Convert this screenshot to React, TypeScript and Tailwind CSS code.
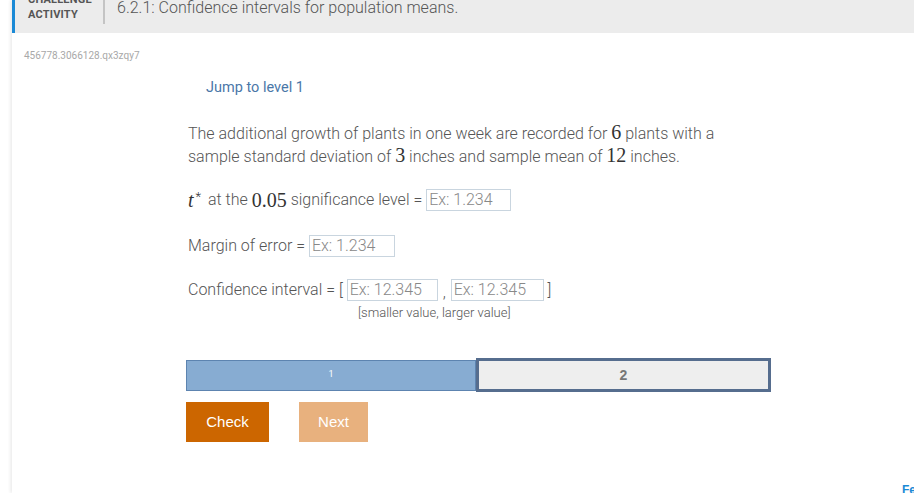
import React from "react";

const M = ({ children, italic = false }: { children: React.ReactNode; italic?: boolean }) => (
  <span className={`font-['Liberation_Serif',serif] text-[20px] leading-[20px] text-[#333] ${italic ? "italic" : ""}`}>{children}</span>
);

const Field = ({ ph, w }: { ph: string; w: string }) => (
  <span className={`inline-flex items-center h-[22px] ${w} border border-[#c9d5df] bg-white px-[2px] text-[16px] font-light text-[#888] leading-none align-middle`}>
    {ph}
  </span>
);

export default function App() {
  return (
    <div className="relative w-[914px] h-[493px] overflow-hidden bg-white font-['Roboto',sans-serif]">
      <div className="ml-[12px] h-full shadow-[-2px_0_3px_rgba(0,0,0,0.07)] flex flex-col">
        <div className="h-[33px] bg-[#ececec] border-l-[3px] border-[#1b8ad6] flex items-start shrink-0">
          <div className="pl-[13px] mt-[-8px] w-[88px] text-[11px] font-bold leading-[15px] text-[#555] tracking-[0.2px]">
            <div>CHALLENGE</div>
            <div>ACTIVITY</div>
          </div>
          <div className="w-[2px] h-[24px] bg-[#c4c4c4]" />
          <div className="ml-[12px] mt-[-2px] text-[16px] font-light text-[#555] leading-[20px]">
            6.2.1: Confidence intervals for population means.
          </div>
        </div>

        <div className="mt-[16px] ml-[12px] text-[10px] leading-[13px] text-[#a8a8a8]">456778.3066128.qx3zqy7</div>

        <div className="ml-[174px] flex flex-col">
          <div className="mt-[16px] ml-[20px] text-[14.5px] leading-[20px] text-[#4a77a8]">Jump to level 1</div>

          <p className="mt-[24px] ml-[2px] text-[16px] leading-[23px] font-light text-[#555]">
            The additional growth of plants in one week are recorded for <M>6</M> plants with a
            <br />
            sample standard deviation of <M>3</M> inches and sample mean of <M>12</M> inches.
          </p>

          <div className="mt-[21px] ml-[2px] h-[22px] flex items-center text-[16px] font-light text-[#555] whitespace-pre">
            <M italic>t</M>
            <span className="text-[13px] text-[#333] self-start mt-[-2px] ml-[2px] mr-[3px]">*</span>
            <span> at the </span>
            <M>0.05</M>
            <span> significance level = </span>
            <Field ph="Ex: 1.234" w="w-[85px]" />
          </div>

          <div className="mt-[24px] ml-[2px] h-[22px] flex items-center text-[16px] font-light text-[#555] whitespace-pre">
            <span>Margin of error = </span>
            <Field ph="Ex: 1.234" w="w-[86px]" />
          </div>

          <div className="mt-[22px] ml-[2px] h-[22px] flex items-center text-[16px] font-light text-[#555] whitespace-pre">
            <span>Confidence interval = [ </span>
            <Field ph="Ex: 12.345" w="w-[91px]" />
            <span className="self-end mb-[-4px] mx-[5px]">,</span>
            <Field ph="Ex: 12.345" w="w-[93px]" />
            <span> ]</span>
          </div>
          <div className="mt-[4px] ml-[172px] text-[13px] leading-[16px] font-light text-[#555]">[smaller value, larger value]</div>

          <div className="mt-[37px] flex items-center w-[585px] h-[34px]">
            <div className="w-[290px] h-[31px] bg-[#87acd2] border border-[#5d84b0] flex items-center justify-center text-[9px] text-white">1</div>
            <div className="w-[295px] h-[34px] bg-[#eeeeee] border-[3px] border-[#566d8e] flex items-center justify-center text-[14px] font-bold text-[#777] font-['Liberation_Sans',sans-serif]">2</div>
          </div>

          <div className="mt-[10px] flex gap-[30px] font-['Liberation_Sans',sans-serif]">
            <div className="w-[83px] h-[40px] bg-[#cc6600] text-white text-[15px] flex items-center justify-center">Check</div>
            <div className="w-[69px] h-[40px] bg-[#e8b17e] text-white text-[15px] flex items-center justify-center">Next</div>
          </div>
        </div>
      </div>
      <div className="absolute left-[902px] top-[481px] text-[12px] font-bold text-[#1b8ad6] font-['Liberation_Sans',sans-serif]">Fe</div>
    </div>
  );
}
